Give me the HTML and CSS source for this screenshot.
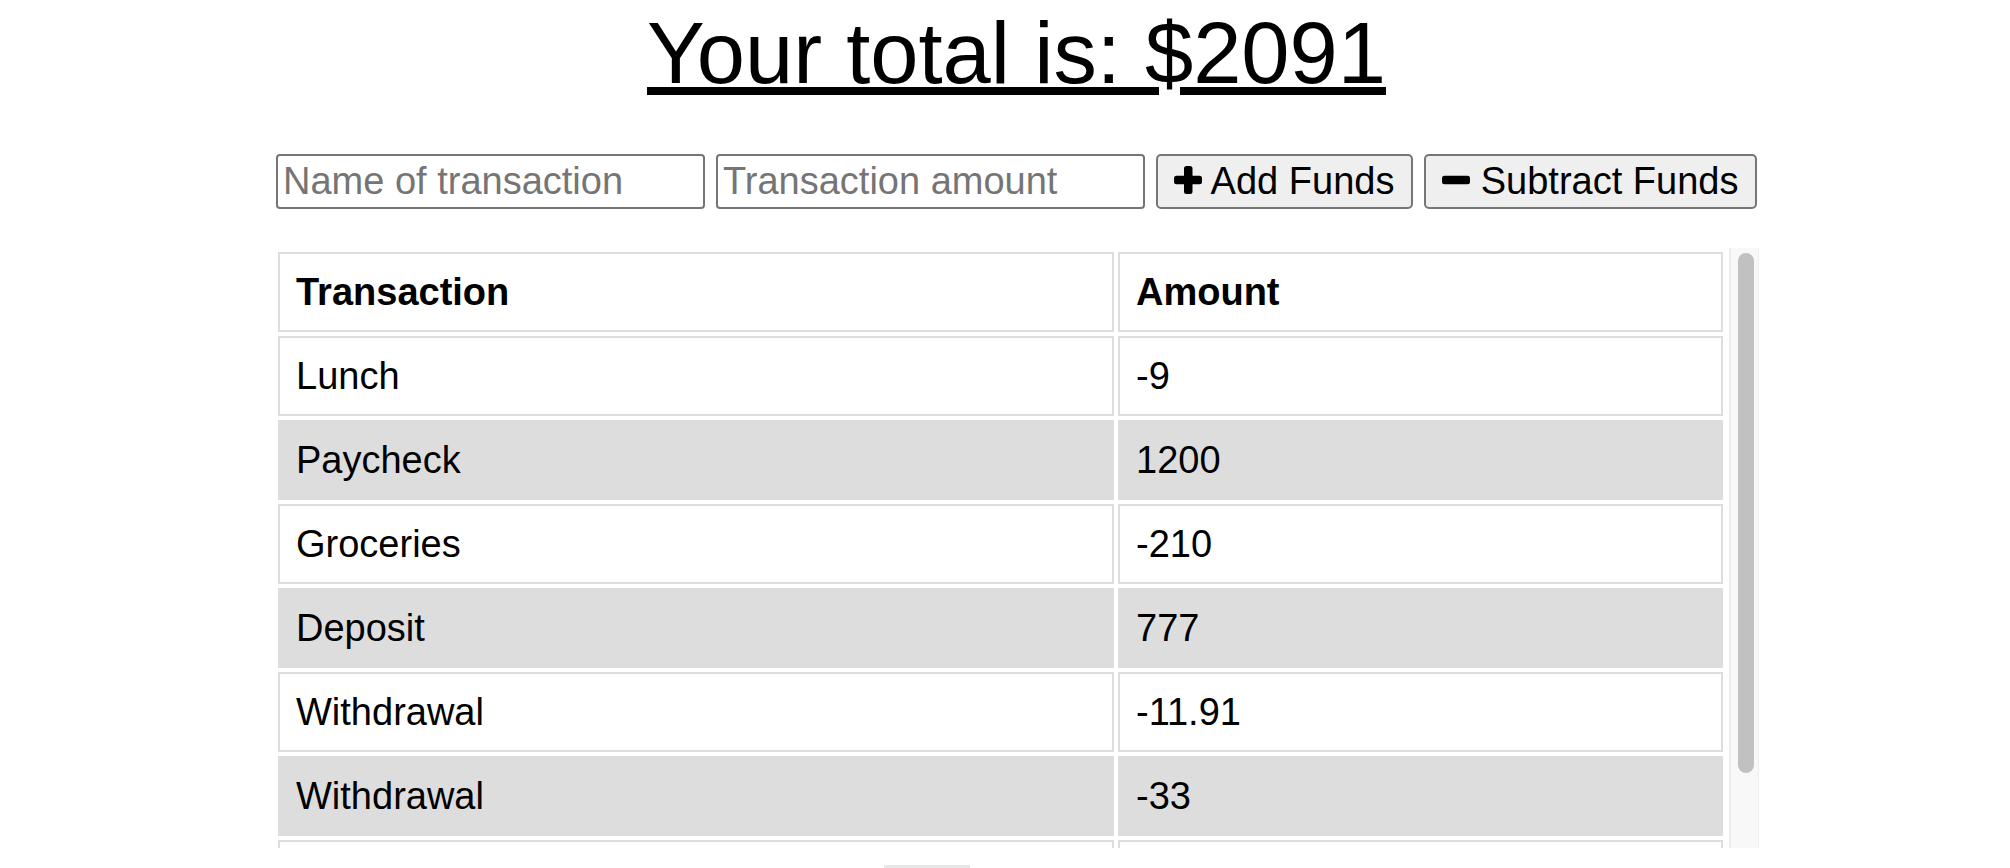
FILE: index.html
```html
<!DOCTYPE html>
<html lang="en">
<head>
<meta charset="utf-8">
<title>Budget Tracker</title>
<link rel="stylesheet" href="styles.css">
</head>
<body>
<main class="app">
  <h1 class="total">Your total is: $2091</h1>
  <form class="entry">
    <input class="field" type="text" placeholder="Name of transaction">
    <input class="field" type="text" inputmode="decimal" placeholder="Transaction amount">
    <button class="btn btn-add" type="button"><svg class="ico" viewBox="0 0 28 28" width="28" height="28" aria-hidden="true"><rect x="10" y="0" width="8.5" height="28" rx="2.5"/><rect x="0" y="9.75" width="28" height="8.5" rx="2.5"/></svg> Add Funds</button>
    <button class="btn btn-sub" type="button"><svg class="ico" viewBox="0 0 28 28" width="28" height="28" aria-hidden="true"><rect x="0" y="9.75" width="28" height="8.5" rx="2.5"/></svg> Subtract Funds</button>
  </form>
  <div class="table-frame">
    <div class="table-wrap">
      <table class="ledger">
        <thead>
          <tr><th class="col-name">Transaction</th><th>Amount</th></tr>
        </thead>
        <tbody>
          <tr><td>Lunch</td><td>-9</td></tr>
          <tr class="alt"><td>Paycheck</td><td>1200</td></tr>
          <tr><td>Groceries</td><td>-210</td></tr>
          <tr class="alt"><td>Deposit</td><td>777</td></tr>
          <tr><td>Withdrawal</td><td>-11.91</td></tr>
          <tr class="alt"><td>Withdrawal</td><td>-33</td></tr>
          <tr><td>Deposit</td><td>377.91</td></tr>
        </tbody>
      </table>
    </div>
    <div class="scrollbar" aria-hidden="true"><div class="thumb"></div></div>
  </div>
  <div class="footer-chip"></div>
</main>
</body>
</html>
```
FILE: styles.css
```css
* {
  box-sizing: border-box;
}

html, body {
  margin: 0;
  background: #fff;
  color: #000;
  font-family: "Liberation Sans", Arial, sans-serif;
}

.app {
  width: 1485px;
  margin-left: 274px;
  padding-top: 3px;
}

.total {
  margin: 0;
  font-size: 86.7px;
  font-weight: normal;
  line-height: 100px;
  text-align: center;
  text-decoration: underline;
  text-decoration-thickness: 8px;
}

.entry {
  display: flex;
  gap: 11px;
  padding: 0 2px;
  margin: 51px 0 0;
}

.field {
  width: 429px;
  height: 55px;
  border: 2px solid #767676;
  border-radius: 4px;
  padding: 2px 5px;
  font-family: "Liberation Sans", Arial, sans-serif;
  font-size: 38px;
  color: #000;
  background: #fff;
}

.field::placeholder {
  color: #757575;
}

.btn {
  height: 55px;
  border: 2px solid #767676;
  border-radius: 5px;
  background: #efefef;
  padding: 0 12px;
  font-family: "Liberation Sans", Arial, sans-serif;
  font-size: 38px;
  color: #000;
  white-space: nowrap;
}

.btn-add {
  width: 257px;
}

.btn-sub {
  width: 334px;
}

.ico {
  fill: #000;
}

.table-frame {
  display: flex;
  height: 600px;
  margin-top: 39px;
}

.table-wrap {
  flex: 1;
  overflow-y: auto;
  scrollbar-width: none;
}

.table-wrap::-webkit-scrollbar {
  display: none;
}

.scrollbar {
  width: 30px;
  flex: none;
  background: #f8f8f8;
  border-left: 2px solid #ececec;
  border-right: 1px solid #efefef;
  padding: 5px 4px 0 7px;
}

.thumb {
  height: 520px;
  background: #c1c1c1;
  border-radius: 8px;
}

.ledger {
  width: 1453px;
  table-layout: fixed;
  border-collapse: separate;
  border-spacing: 4px;
  font-size: 38px;
}

.ledger th,
.ledger td {
  border: 2px solid #ddd;
  padding: 16px;
  text-align: left;
  line-height: 44px;
}

.ledger th {
  font-weight: bold;
}

.ledger .col-name {
  width: 836px;
}

.ledger .alt td {
  background: #ddd;
}

.footer-chip {
  margin: 17px 0 0 610px;
  width: 86px;
  height: 3px;
  background: #e6e6e6;
}
```
